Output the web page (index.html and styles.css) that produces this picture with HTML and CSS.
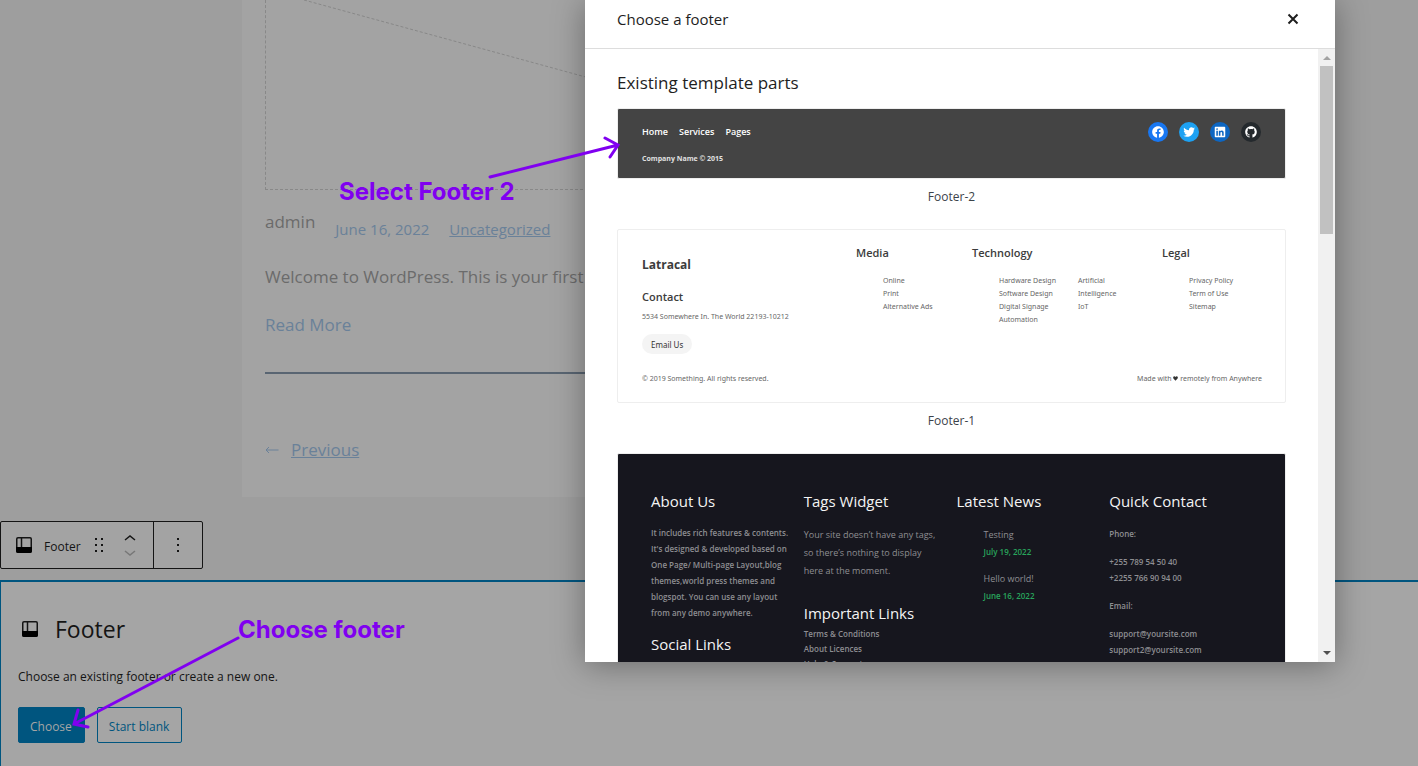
FILE: index.html
```html
<!DOCTYPE html>
<html lang="en">
<head>
<meta charset="utf-8">
<title>Choose a footer</title>
<link rel="stylesheet" href="styles.css">
</head>
<body>
<main class="editor">
  <article class="post">
    <div class="thumb"><svg class="thumb-line" width="1000" height="265" viewBox="0 0 1000 265"><path d="M38 0L1000 263" /></svg></div>
    <div class="meta"><span class="author">admin</span><a href="#">June 16, 2022</a><a class="underlined" href="#">Uncategorized</a></div>
    <p class="excerpt">Welcome to WordPress. This is your first post.</p>
    <a class="more" href="#">Read More</a>
    <hr class="rule">
    <nav class="pager"><svg width="14" height="10" viewBox="0 0 14 10"><path d="M13.500 5H1M4 2L1 5l3 3"/></svg><a class="underlined" href="#">Previous</a></nav>
  </article>

  <div class="toolbar">
    <div class="tool-group">
      <button class="tool-block"><svg class="part-icon" width="16" height="16" viewBox="0 0 16 16"><path class="outline" d="M2 .75h12q1.250 0 1.250 1.250v12q0 1.250-1.250 1.250H2Q.75 15.250.75 14V2Q.75.75 2 .75zM5.500 1v10"/><path d="M0 10h16v4q0 2-2 2H2q-2 0-2-2z"/></svg><span>Footer</span></button>
      <button class="tool" aria-label="Drag"><svg width="10" height="16" viewBox="0 0 10 16"><path d="M1 1h2v2H1zM7 1h2v2H7zM1 7h2v2H1zM7 7h2v2H7zM1 13h2v2H1zM7 13h2v2H7z"/></svg></button>
      <span class="movers">
        <button class="tool" aria-label="Move up"><svg width="12" height="7" viewBox="0 0 12 7"><path class="stroke" d="M1 6l5-4 5 4"/></svg></button>
        <button class="tool muted" aria-label="Move down"><svg width="12" height="7" viewBox="0 0 12 7"><path class="stroke" d="M1 1l5 4 5-4"/></svg></button>
      </span>
    </div>
    <button class="tool tool-more" aria-label="Options"><svg width="4" height="16" viewBox="0 0 4 16"><path d="M1 1h2v2H1zM1 7h2v2H1zM1 13h2v2H1z"/></svg></button>
  </div>

  <section class="placeholder">
    <h2><svg class="part-icon" width="16" height="16" viewBox="0 0 16 16"><path class="outline" d="M2 .75h12q1.250 0 1.250 1.250v12q0 1.250-1.250 1.250H2Q.75 15.250.75 14V2Q.75.75 2 .75zM5.500 1v10"/><path d="M0 10h16v4q0 2-2 2H2q-2 0-2-2z"/></svg>Footer</h2>
    <p>Choose an existing footer or create a new one.</p>
    <div class="actions"><button class="btn primary">Choose</button><button class="btn">Start blank</button></div>
  </section>
</main>

<div class="modal" role="dialog" aria-labelledby="title">
  <header class="modal-head">
    <h1 id="title">Choose a footer</h1>
    <button class="close" aria-label="Close"><svg width="12" height="12" viewBox="0 0 12 12"><path d="M1.500 1.500l9 9M10.500 1.500l-9 9"/></svg></button>
  </header>
  <div class="modal-body">
    <div class="parts">
      <h2>Existing template parts</h2>

      <div class="part part-two">
        <div>
          <nav class="menu"><a href="#">Home</a><a href="#">Services</a><a href="#">Pages</a></nav>
          <p>Company Name © 2015</p>
        </div>
        <div class="social">
          <a class="fb" href="#" aria-label="Facebook"><svg viewBox="0 0 24 24"><path d="M12 2C6.500 2 2 6.500 2 12c0 5 3.700 9.100 8.400 9.900v-7H7.900V12h2.500V9.800c0-2.500 1.500-3.900 3.800-3.900 1.100 0 2.200.2 2.200.2v2.500h-1.300c-1.200 0-1.600.8-1.600 1.600V12h2.800l-.4 2.900h-2.300v7C18.300 21.100 22 17 22 12c0-5.500-4.500-10-10-10z"/></svg></a>
          <a class="tw" href="#" aria-label="Twitter"><svg viewBox="0 0 24 24"><path d="M22.230 5.924c-.736.326-1.527.547-2.357.646.847-.508 1.498-1.312 1.804-2.270-.793.470-1.671.812-2.606.996C18.324 4.498 17.257 4 16.077 4c-2.266 0-4.103 1.837-4.103 4.103 0 .322.036.635.106.935-3.410-.171-6.433-1.804-8.457-4.287-.353.606-.556 1.311-.556 2.063 0 1.424.724 2.680 1.825 3.415-.673-.021-1.305-.206-1.859-.513v.052c0 1.988 1.414 3.647 3.292 4.023-.344.095-.707.145-1.081.145-.264 0-.521-.026-.772-.074.522 1.630 2.038 2.817 3.833 2.850-1.404 1.100-3.174 1.757-5.096 1.757-.332 0-.66-.020-.979-.057 1.816 1.164 3.973 1.843 6.290 1.843 7.547 0 11.675-6.252 11.675-11.675 0-.178-.004-.355-.012-.531.802-.578 1.497-1.300 2.047-2.125z"/></svg></a>
          <a class="li" href="#" aria-label="LinkedIn"><svg viewBox="0 0 24 24"><path d="M19.700 3H4.300C3.582 3 3 3.582 3 4.300v15.400c0 .718.582 1.300 1.300 1.300h15.400c.718 0 1.300-.582 1.300-1.300V4.300c0-.718-.582-1.300-1.300-1.300zM8.339 18.338H5.667v-8.590h2.672v8.590zM7.004 8.574c-.857 0-1.549-.694-1.549-1.548 0-.855.691-1.548 1.549-1.548.854 0 1.547.694 1.547 1.548 0 .855-.692 1.548-1.547 1.548zm11.335 9.764h-2.669V14.160c0-.996-.017-2.278-1.387-2.278-1.389 0-1.601 1.086-1.601 2.206v4.250h-2.667v-8.590h2.559v1.174h.037c.356-.675 1.227-1.387 2.526-1.387 2.703 0 3.203 1.779 3.203 4.092v4.711z"/></svg></a>
          <a class="gh" href="#" aria-label="GitHub"><svg viewBox="0 0 24 24"><path d="M12 2C6.477 2 2 6.477 2 12c0 4.419 2.865 8.166 6.839 9.489.5.090.682-.218.682-.484 0-.236-.009-.866-.014-1.699-2.782.602-3.369-1.340-3.369-1.340-.455-1.157-1.110-1.465-1.110-1.465-.909-.62.069-.608.069-.608 1.004.071 1.532 1.030 1.532 1.030.891 1.529 2.341 1.089 2.910.833.091-.647.349-1.086.635-1.337-2.220-.251-4.555-1.111-4.555-4.943 0-1.091.39-1.984 1.030-2.682-.103-.254-.447-1.270.097-2.646 0 0 .84-.269 2.750 1.025A9.600 9.600 0 0112 6.836c.85.004 1.705.114 2.504.336 1.909-1.294 2.748-1.025 2.748-1.025.546 1.376.202 2.394.1 2.646.64.699 1.026 1.591 1.026 2.682 0 3.841-2.337 4.687-4.565 4.935.359.307.679.917.679 1.852 0 1.335-.012 2.415-.012 2.741 0 .269.180.579.688.481C19.138 20.161 22 16.416 22 12c0-5.523-4.477-10-10-10z"/></svg></a>
        </div>
      </div>
      <p class="caption">Footer-2</p>

      <div class="part part-one">
        <div class="site-grid">
          <div class="brand">
            <h3>Latracal</h3>
            <h4>Contact</h4>
            <p>5534 Somewhere In. The World 22193-10212</p>
            <button class="pill">Email Us</button>
          </div>
          <div><h4>Media</h4><ul><li>Online</li><li>Print</li><li>Alternative Ads</li></ul></div>
          <div><h4>Technology</h4><div class="lists"><ul><li>Hardware Design</li><li>Software Design</li><li>Digital Signage</li><li>Automation</li></ul><ul><li>Artificial</li><li>Intelligence</li><li>IoT</li></ul></div></div>
          <div><h4>Legal</h4><ul><li>Privacy Policy</li><li>Term of Use</li><li>Sitemap</li></ul></div>
        </div>
        <div class="legal"><span>© 2019 Something. All rights reserved.</span><span>Made with <svg width="5" height="5" viewBox="0 0 12 12"><path d="M6 11.500L1 6Q-.5 3 1.500 1.300 4-.5 6 2.500 8-.5 10.500 1.300 12.500 3 11 6z"/></svg> remotely from Anywhere</span></div>
      </div>
      <p class="caption">Footer-1</p>

      <div class="part part-dark">
        <div>
          <h3>About Us</h3>
          <p class="about">It includes rich features &amp; contents.<br>It's designed &amp; developed based on<br>One Page/ Multi-page Layout,blog<br>themes,world press themes and<br>blogspot. You can use any layout<br>from any demo anywhere.</p>
          <h3>Social Links</h3>
        </div>
        <div>
          <h3>Tags Widget</h3>
          <p class="tags">Your site doesn’t have any tags,<br>so there’s nothing to display<br>here at the moment.</p>
          <h3>Important Links</h3>
          <p class="links">Terms &amp; Conditions<br>About Licences<br>Help &amp; Support</p>
        </div>
        <div>
          <h3>Latest News</h3>
          <ul class="news"><li>Testing<time>July 19, 2022</time></li><li>Hello world!<time>June 16, 2022</time></li></ul>
        </div>
        <div class="contact">
          <h3>Quick Contact</h3>
          <p>Phone:</p>
          <p>+255 789 54 50 40<br>+2255 766 90 94 00</p>
          <p>Email:</p>
          <p>support@yoursite.com<br>support2@yoursite.com</p>
        </div>
      </div>
    </div>
    <div class="scrollbar"><svg width="8" height="4" viewBox="0 0 8 4"><path fill="#a3a3a3" d="M4 0l4 4H0z"/></svg><span class="thumb-bar"></span><svg width="8" height="4" viewBox="0 0 8 4"><path fill="#505050" d="M0 0h8L4 4z"/></svg></div>
  </div>
</div>

<div class="note note-select">Select Footer 2</div>
<div class="note note-choose">Choose footer</div>
<svg class="arrows" width="640" height="766" viewBox="0 0 640 766"><path d="M490 177L618 145M605 138l13 7-8 12M238 638L74 724M78 710l-4 14 14 3"/></svg>
</body>
</html>
```
FILE: styles.css
```css
* { box-sizing: border-box; }
body { margin: 0; min-height: 100vh; position: relative; overflow: hidden; background: #9e9e9e; color: #141414; font: 12px/20px "Open Sans", "Noto Sans", sans-serif; }
h1, h2, h3, h4, p, ul { margin: 0; padding: 0; font-weight: 400; }
ul { list-style: none; }
a { color: inherit; text-decoration: none; }
button { font: inherit; color: inherit; background: none; border: 0; padding: 0; display: flex; align-items: center; justify-content: center; }
svg { flex: none; }

.editor { min-height: 100vh; display: flex; flex-direction: column; align-items: flex-start; }
.post { margin-left: 242px; margin-right: 242px; align-self: stretch; padding: 0 23px 32px; background: #a3a3a3; color: #6b6b6b; font-size: 17px; line-height: 30px; white-space: nowrap; overflow: hidden; }
.thumb { height: 190px; border: 1px dashed #888; border-top: 0; overflow: hidden; }
.thumb-line { display: block; fill: none; stroke: #888; stroke-dasharray: 3 2; }
.meta { display: flex; gap: 20px; font-size: 15px; color: #6a8199; padding-top: 17px; }
.meta a { padding-top: 7px; }
.author { color: #6b6b6b; font-size: 17px; }
.underlined { text-decoration: underline; }
.excerpt { padding-top: 18px; }
.more { display: block; color: #6a8199; padding-top: 18px; }
.rule { margin: 32px 0 61px; border: 0; height: 2px; background: #596572; }
.pager { display: flex; align-items: center; gap: 12px; color: #6a8199; }
.pager svg { fill: none; stroke: currentColor; }

.toolbar { display: flex; height: 48px; margin-top: 24px; border: 1px solid #141414; border-radius: 2px; background: #a3a3a3; }
.tool-group { display: flex; align-items: center; padding: 0 17px 0 15px; border-right: 1px solid #141414; }
.tool-block { gap: 12px; }
.tool-block span { padding-top: 3px; }
.tool svg { fill: currentColor; }
.tool-group > .tool { margin: 0 20px 0 13px; }
.movers { display: flex; flex-direction: column; gap: 9px; }
.muted { color: #777; }
.tool .stroke { fill: none; stroke: currentColor; stroke-width: 1.5; }
.tool-more { width: 48px; }
.part-icon .outline { fill: none; stroke: currentColor; stroke-width: 1.5; }

.placeholder { flex: 1; align-self: stretch; margin-top: 11px; padding: 29px 17px 20px; border: solid #00557f; border-width: 2px 0 0 1px; background: #a5a5a5; }
.placeholder h2 { display: flex; align-items: center; gap: 17px; padding-left: 4px; font-size: 23px; line-height: 36px; }
.placeholder p { padding: 20px 0; }
.actions { display: flex; gap: 12px; }
.btn { height: 36px; padding: 3px 12px 0 11px; border: 1px solid #00557f; border-radius: 2px; color: #00557f; }
.primary { background: #00557f; color: #a5a5a5; }

.modal { position: absolute; top: 0; right: 83px; bottom: 104px; width: 750px; display: flex; flex-direction: column; background: #fff; color: #1e1e1e; box-shadow: 0 3px 30px rgba(0, 0, 0, .35); }
.modal-head { display: flex; align-items: center; justify-content: space-between; padding: 0 36px 10px 32px; height: 49px; flex: none; border-bottom: 1px solid #ddd; }
.modal-head h1 { font-size: 15px; font-weight: 500; }
.close svg { fill: none; stroke: #1e1e1e; stroke-width: 2; }
.modal-body { flex: 1; min-height: 0; display: flex; }
.parts { flex: 1; overflow: hidden; padding: 21px 32px 0; }
.parts h2 { font-size: 17px; line-height: 26px; padding-bottom: 12px; }
.scrollbar { width: 17px; flex: none; display: flex; flex-direction: column; align-items: center; padding: 7px 0; background: #f1f1f1; }
.thumb-bar { width: 13px; height: 168px; margin: 6px 0 auto; background: #c1c1c1; }
.part { border: 1px solid #eee; border-radius: 2px; white-space: nowrap; font-family: "Noto Sans", "Open Sans", sans-serif; }
.caption { padding: 8px 0 22px; text-align: center; color: #3c434a; }

.part-two { display: flex; justify-content: space-between; padding: 12px 24px 9px; background: #444; color: #fff; font-family: "Open Sans", sans-serif; font-size: 9px; font-weight: 600; }
.menu { display: flex; gap: 11px; line-height: 22px; }
.part-two p { padding-top: 6px; font-size: 7px; font-weight: 700; color: #e0e0e0; }
.social { display: flex; gap: 11px; padding-top: 1px; }
.social a { width: 20px; height: 20px; padding: 3px; border-radius: 50%; }
.social svg { display: block; width: 14px; height: 14px; fill: #fff; }
.fb { background: #1877f2; }
.tw { background: #1da1f2; }
.li { background: #0d66c2; }
.gh { background: #24292d; }

.part-one { padding: 16px 23px 17px 24px; color: #666; font-size: 7px; line-height: 13px; }
.site-grid { display: grid; grid-template-columns: 214fr 116fr 190fr 100fr; }
.part-one h3, .part-one h4 { color: #3c3c3c; font-family: "Open Sans", sans-serif; font-weight: 600; font-size: 11px; line-height: 14px; }
.part-one h3 { font-size: 12px; line-height: 16px; font-weight: 700; }
.brand { padding-top: 11px; }
.brand h4 { padding: 17px 0 6px; box-sizing: content-box; }
.pill { margin-top: 11px; height: 20px; padding: 0 9px; border-radius: 10px; background: #f4f4f4; color: #333; font-size: 8px; }
.part-one ul { padding: 14px 0 0 27px; }
.lists { display: flex; }
.lists ul + ul { padding-left: 22px; }
.legal { display: flex; justify-content: space-between; padding-top: 18px; }
.legal svg { fill: #333; }

.part-dark { display: grid; grid-template-columns: repeat(4, 1fr); gap: 10px; height: 340px; padding: 34px 33px; background: #16161e; color: #8e8e92; font-family: "Open Sans", sans-serif; font-size: 8px; font-weight: 600; line-height: 16px; }
.part-dark p { font-weight: 600; }
.part-dark h3 { color: #f4f4f4; font-size: 15px; line-height: 26px; }
.about { padding: 11px 0 10px; }
.part-dark .tags { padding: 12px 0 20px; font-size: 9px; font-weight: 500; line-height: 18px; }
.links { line-height: 15px; }
.news { padding: 12px 0 0 27px; font-size: 9px; font-weight: 500; line-height: 18px; }
.news time { display: block; color: #28a55c; line-height: 16px; font-size: 8px; font-weight: 600; }
.news li { padding-bottom: 10px; }
.contact p { padding-bottom: 12px; }
.contact h3 { padding-bottom: 12px; }

.note { position: absolute; font: 700 24px/30px Inter, sans-serif; color: #8000f0; }
.note-select { left: 339px; top: 177px; }
.note-choose { left: 238px; top: 615px; }
.arrows { position: absolute; left: 0; top: 0; fill: none; stroke: #8000f0; stroke-width: 3; stroke-linecap: round; pointer-events: none; }
```
